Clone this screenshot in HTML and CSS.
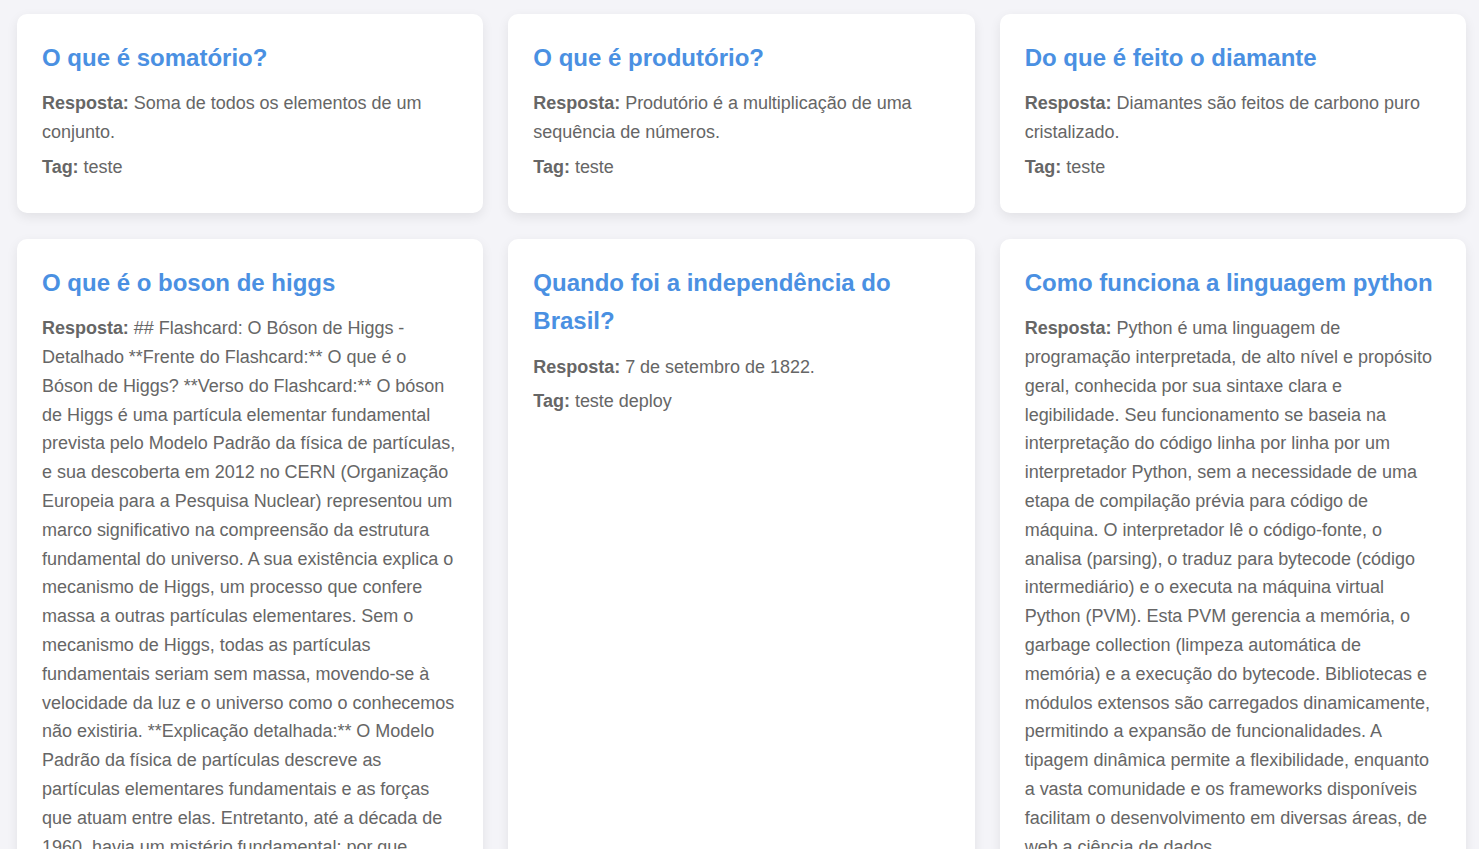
FILE: index.html
```html
<!DOCTYPE html>
<html lang="pt-BR">
<head>
<meta charset="utf-8">
<title>Flashcards</title>
<link rel="stylesheet" href="styles.css">
</head>
<body>
<main class="grid">
  <article class="card">
    <h3 class="card-title">O que é somatório?</h3>
    <p class="card-text"><strong>Resposta:</strong> Soma de todos os elementos de um conjunto.</p>
    <p class="card-text"><strong>Tag:</strong> teste</p>
  </article>
  <article class="card">
    <h3 class="card-title">O que é produtório?</h3>
    <p class="card-text"><strong>Resposta:</strong> Produtório é a multiplicação de uma sequência de números.</p>
    <p class="card-text"><strong>Tag:</strong> teste</p>
  </article>
  <article class="card">
    <h3 class="card-title">Do que é feito o diamante</h3>
    <p class="card-text"><strong>Resposta:</strong> Diamantes são feitos de carbono puro cristalizado.</p>
    <p class="card-text"><strong>Tag:</strong> teste</p>
  </article>
  <article class="card">
    <h3 class="card-title">O que é o boson de higgs</h3>
    <p class="card-text"><strong>Resposta:</strong> ## Flashcard: O Bóson de Higgs - Detalhado **Frente do Flashcard:** O que é o Bóson de Higgs? **Verso do Flashcard:** O bóson de Higgs é uma partícula elementar fundamental prevista pelo Modelo Padrão da física de partículas, e sua descoberta em 2012 no CERN (Organização Europeia para a Pesquisa Nuclear) representou um marco significativo na compreensão da estrutura fundamental do universo. A sua existência explica o mecanismo de Higgs, um processo que confere massa a outras partículas elementares. Sem o mecanismo de Higgs, todas as partículas fundamentais seriam sem massa, movendo-se à velocidade da luz e o universo como o conhecemos não existiria. **Explicação detalhada:** O Modelo Padrão da física de partículas descreve as partículas elementares fundamentais e as forças que atuam entre elas. Entretanto, até a década de 1960, havia um mistério fundamental: por que algumas partículas possuem massa enquanto outras, como o fóton, não possuem? A resposta veio com a proposta de um campo que permeia todo o universo, o campo de Higgs.</p>
    <p class="card-text"><strong>Tag:</strong> teste</p>
  </article>
  <article class="card">
    <h3 class="card-title">Quando foi a independência do Brasil?</h3>
    <p class="card-text"><strong>Resposta:</strong> 7 de setembro de 1822.</p>
    <p class="card-text"><strong>Tag:</strong> teste deploy</p>
  </article>
  <article class="card">
    <h3 class="card-title">Como funciona a linguagem python</h3>
    <p class="card-text"><strong>Resposta:</strong> Python é uma linguagem de programação interpretada, de alto nível e propósito geral, conhecida por sua sintaxe clara e legibilidade. Seu funcionamento se baseia na interpretação do código linha por linha por um interpretador Python, sem a necessidade de uma etapa de compilação prévia para código de máquina. O interpretador lê o código-fonte, o analisa (parsing), o traduz para bytecode (código intermediário) e o executa na máquina virtual Python (PVM). Esta PVM gerencia a memória, o garbage collection (limpeza automática de memória) e a execução do bytecode. Bibliotecas e módulos extensos são carregados dinamicamente, permitindo a expansão de funcionalidades. A tipagem dinâmica permite a flexibilidade, enquanto a vasta comunidade e os frameworks disponíveis facilitam o desenvolvimento em diversas áreas, de web a ciência de dados.</p>
    <p class="card-text"><strong>Tag:</strong> teste</p>
  </article>
</main>
</body>
</html>
```

FILE: styles.css
```css
html, body {
  margin: 0;
  padding: 0;
  background: #f4f4f8;
}

body {
  font-family: "Liberation Sans", Arial, sans-serif;
  color: #666666;
}

.grid {
  display: grid;
  grid-template-columns: repeat(3, 1fr);
  gap: 26px 25px;
  padding: 14px 13px 20px 17px;
}

.card {
  background: #ffffff;
  border-radius: 10px;
  box-shadow: 0 4px 12px rgba(0, 0, 0, 0.08);
  padding: 25px;
}

.card-title {
  margin: 0 0 12px;
  font-size: 24px;
  font-weight: 700;
  line-height: 1.6;
  color: #4a90e2;
}

.card-text {
  margin: 0 0 6px;
  font-size: 18px;
  line-height: 1.6;
  letter-spacing: -0.02px;
}

.card-text strong {
  font-weight: 700;
}
```
